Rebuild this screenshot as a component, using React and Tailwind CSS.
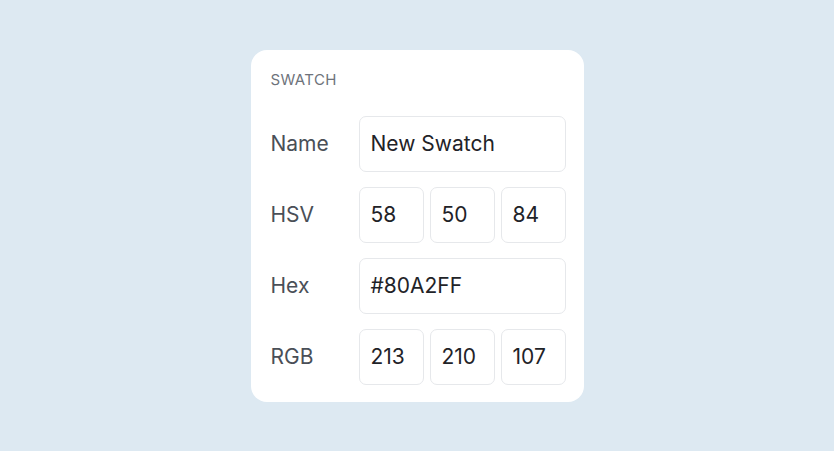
import React from 'react';

const font = { fontFamily: 'Inter, "Noto Sans", sans-serif' };

function Field({ value }) {
  return (
    <div className="h-[56px] flex-1 min-w-0 flex items-center px-[11px] pt-[1px] border-[1.5px] border-[#e6e8eb] rounded-[7px] text-[21px] text-[#1f2328]">
      {value}
    </div>
  );
}

function Row({ label, values }) {
  return (
    <div className="flex items-center">
      <div className="w-[88px] shrink-0 pt-[1px] text-[21px] text-[#4a4f57]">{label}</div>
      <div className="flex gap-[6px] w-[207px] shrink-0">
        {values.map((v, i) => (
          <Field key={i} value={v} />
        ))}
      </div>
    </div>
  );
}

export default function App() {
  return (
    <div className="w-full h-[451px] bg-[#dde9f2] flex items-center justify-center" style={font}>
      <div className="w-[333px] bg-white rounded-[16px] pl-[20px] pr-[18px] pt-[20px] pb-[17px]">
        <div className="h-[20px] leading-[20px] text-[15px] text-[#6e737b] tracking-[0.4px] mb-[26px]">SWATCH</div>
        <div className="flex flex-col gap-[15px]">
          <Row label="Name" values={['New Swatch']} />
          <Row label="HSV" values={['58', '50', '84']} />
          <Row label="Hex" values={['#80A2FF']} />
          <Row label="RGB" values={['213', '210', '107']} />
        </div>
      </div>
    </div>
  );
}
